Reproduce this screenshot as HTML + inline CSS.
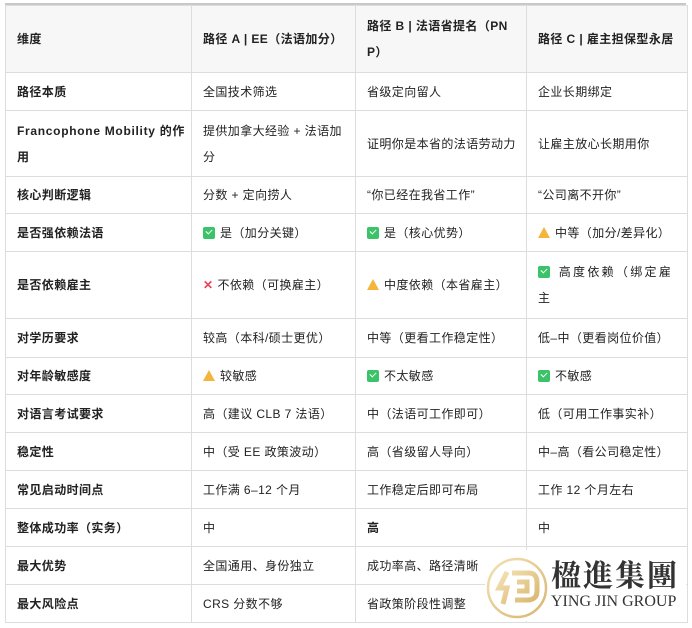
<!DOCTYPE html>
<html><head><meta charset="utf-8"><style>
body{margin:0;background:#fff;width:692px;height:628px;overflow:hidden;position:relative;font-family:"Liberation Sans","Noto Sans CJK SC",sans-serif;font-size:12px;color:#222;letter-spacing:0.4px}
.top{position:absolute;left:5px;top:3px;width:681px;height:2px;background:#c8c8c8}
table{position:absolute;left:5px;top:5px;border-collapse:collapse;table-layout:fixed;width:682px}
td{border:1px solid #ddd;padding:0 11px;vertical-align:middle;line-height:26px;white-space:nowrap}
tr:first-child td{background:#f7f7f7;font-weight:bold}
td:first-child{font-weight:bold}
.ck{display:inline-block;width:12px;height:12px;background:#3cc36a;border-radius:2px;vertical-align:-2px;margin-right:5px;position:relative}
.ck:after{content:"";position:absolute;left:3px;top:2px;width:5px;height:3px;border-left:1.5px solid #fff;border-bottom:1.5px solid #fff;transform:rotate(-45deg)}
.x{color:#e8455b;font-weight:bold;margin-right:4px}
.w{display:inline-block;width:0;height:0;border-left:6px solid transparent;border-right:6px solid transparent;border-bottom:11px solid #f5b53a;vertical-align:-1px;margin-right:5px}
.logo{position:absolute;left:485px;top:550px;width:201px;height:71px;background:#fff}
</style></head><body>
<div class="top"></div>
<table>
<colgroup><col style="width:186px"><col style="width:164px"><col style="width:171px"><col style="width:161px"></colgroup>
<tr style="height:67px"><td>维度</td><td>路径 A | EE（法语加分）</td><td>路径 B | 法语省提名（PN<br>P）</td><td>路径 C | 雇主担保型永居</td></tr>
<tr style="height:38px"><td>路径本质</td><td>全国技术筛选</td><td>省级定向留人</td><td>企业长期绑定</td></tr>
<tr style="height:66px"><td style="letter-spacing:0.7px">Francophone Mobility 的作<br>用</td><td>提供加拿大经验 + 法语加<br>分</td><td>证明你是本省的法语劳动力</td><td>让雇主放心长期用你</td></tr>
<tr style="height:37px"><td>核心判断逻辑</td><td>分数 + 定向捞人</td><td>“你已经在我省工作”</td><td>“公司离不开你”</td></tr>
<tr style="height:38px"><td>是否强依赖法语</td><td><span class="ck"></span>是（加分关键）</td><td><span class="ck"></span>是（核心优势）</td><td><span class="w"></span>中等（加分/差异化）</td></tr>
<tr style="height:67px"><td>是否依赖雇主</td><td><span class="x">✕</span>不依赖（可换雇主）</td><td><span class="w"></span>中度依赖（本省雇主）</td><td><span class="ck"></span> <span style="letter-spacing:2.3px">高度依赖（绑定雇</span><br>主</td></tr>
<tr style="height:39px"><td>对学历要求</td><td>较高（本科/硕士更优）</td><td>中等（更看工作稳定性）</td><td>低–中（更看岗位价值）</td></tr>
<tr style="height:37px"><td>对年龄敏感度</td><td><span class="w"></span>较敏感</td><td><span class="ck"></span>不太敏感</td><td><span class="ck"></span>不敏感</td></tr>
<tr style="height:38px"><td>对语言考试要求</td><td>高（建议 CLB 7 法语）</td><td>中（法语可工作即可）</td><td>低（可用工作事实补）</td></tr>
<tr style="height:38px"><td>稳定性</td><td>中（受 EE 政策波动）</td><td>高（省级留人导向）</td><td>中–高（看公司稳定性）</td></tr>
<tr style="height:38px"><td>常见启动时间点</td><td>工作满 6–12 个月</td><td>工作稳定后即可布局</td><td>工作 12 个月左右</td></tr>
<tr style="height:38px"><td>整体成功率（实务）</td><td>中</td><td style="font-weight:bold">高</td><td>中</td></tr>
<tr style="height:38px"><td>最大优势</td><td>全国通用、身份独立</td><td>成功率高、路径清晰</td><td></td></tr>
<tr style="height:38px"><td>最大风险点</td><td>CRS 分数不够</td><td>省政策阶段性调整</td><td></td></tr>
</table>
<div class="logo">
<svg width="70" height="71" style="position:absolute;left:0;top:0">
<defs><linearGradient id="g" x1="0" y1="0" x2="1" y2="1"><stop offset="0" stop-color="#f3e2b5"/><stop offset="1" stop-color="#d9b56e"/></linearGradient></defs>
<circle cx="32" cy="38" r="29" fill="none" stroke="url(#g)" stroke-width="2.5"/>
<path d="M22 22 L14 38 L22 38 L18 54 M27 23 H44 Q52 23 52 33 V41 Q52 50 42 50 H30 M32 32 H42 V41 H32" fill="none" stroke="url(#g)" stroke-width="5"/>
</svg>
<div style="position:absolute;left:66px;top:6px;font-family:'Noto Serif CJK SC',serif;font-size:30px;font-weight:bold;color:#333;letter-spacing:2px;line-height:34px">楹進集團</div>
<div style="position:absolute;left:66px;top:43px;font-family:'Liberation Serif',serif;font-size:16px;color:#333;line-height:18px;letter-spacing:0">YING JIN GROUP</div>
</div>
</body></html>
